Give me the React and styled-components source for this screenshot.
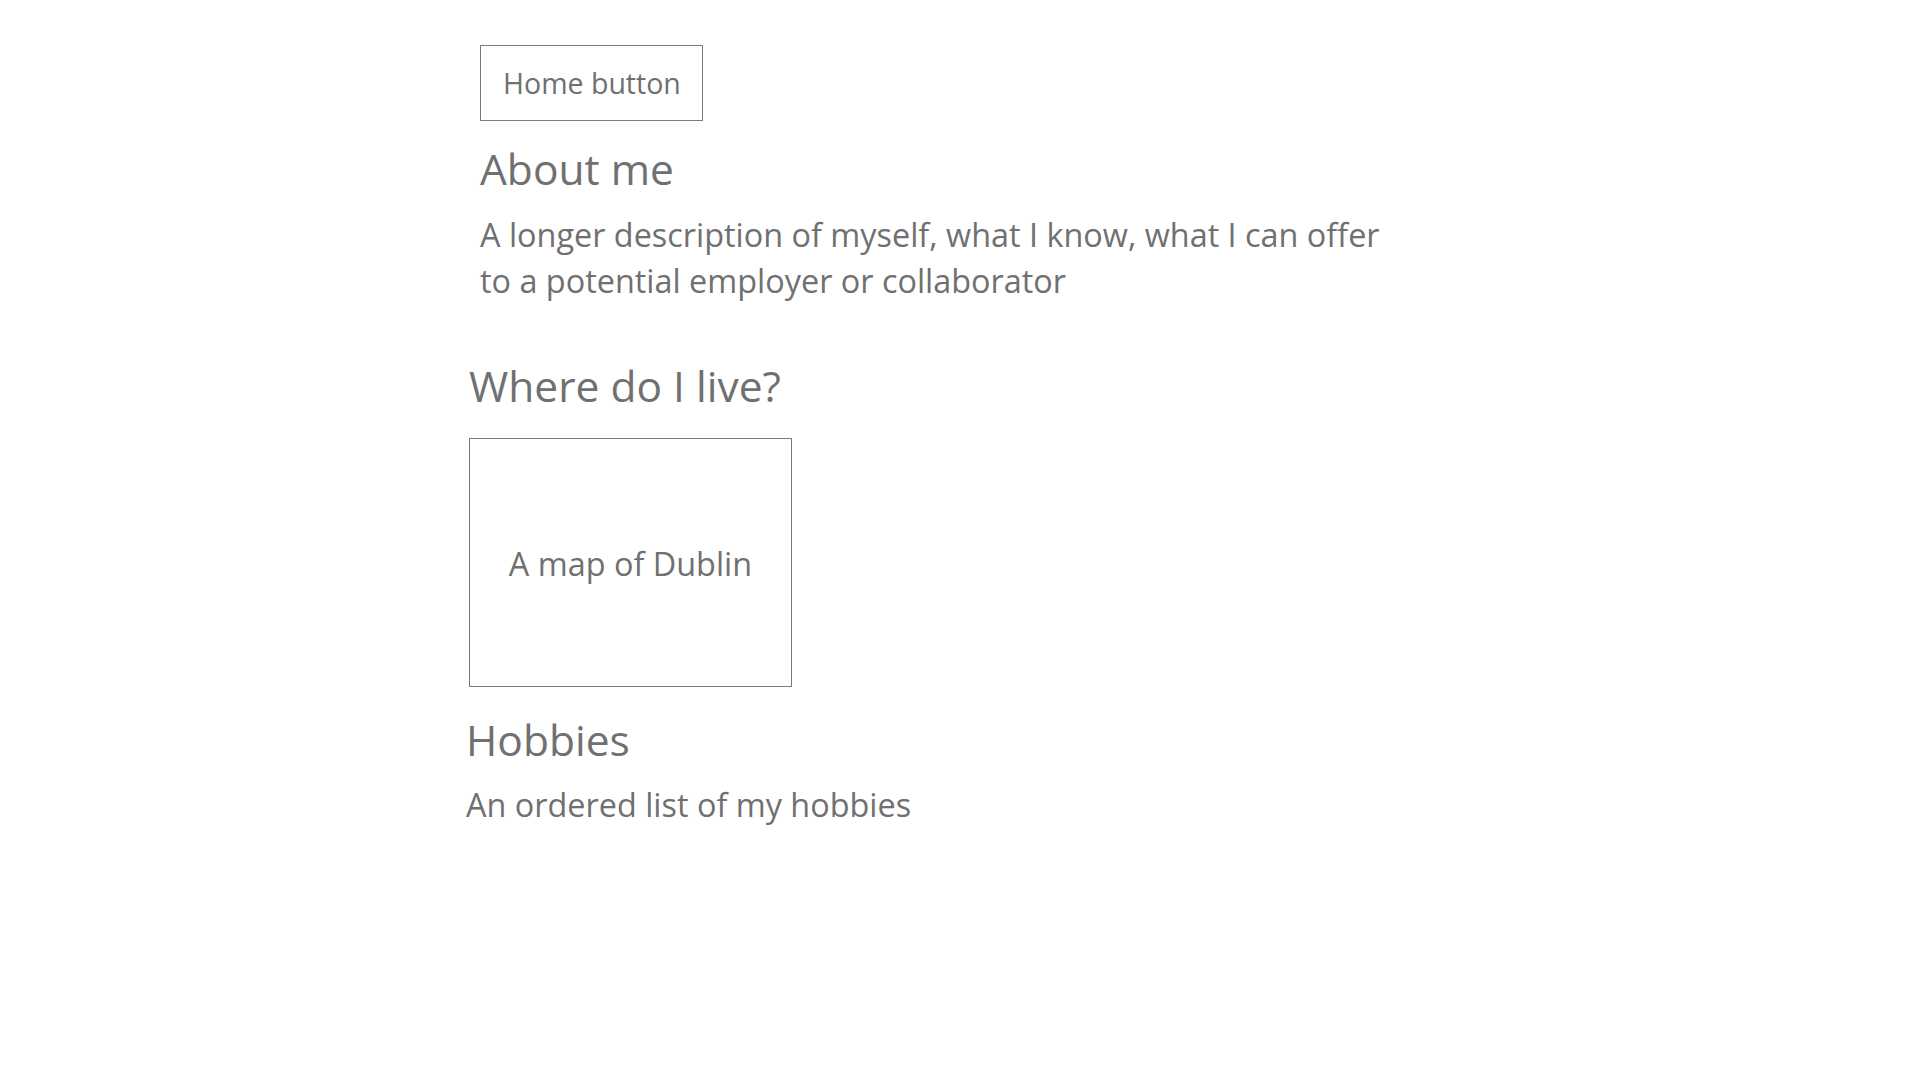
import React from "react";
import styled, { createGlobalStyle } from "styled-components";

const GlobalStyle = createGlobalStyle`
  html, body {
    margin: 0;
    padding: 0;
    background: #ffffff;
  }
  body {
    font-family: "Open Sans", "Noto Sans", "Liberation Sans", sans-serif;
    color: #707070;
  }
`;

const Page = styled.main`
  display: flex;
  flex-direction: column;
  align-items: flex-start;
  padding: 45px 0 60px 466px;
`;

const Section = styled.section`
  display: flex;
  flex-direction: column;
  align-items: flex-start;
  margin-left: ${(p) => p.$indent || 0}px;
  margin-top: ${(p) => p.$top || 0}px;
`;

const HomeButton = styled.button`
  font-family: inherit;
  font-size: 28.5px;
  line-height: 40px;
  color: #707070;
  background: #ffffff;
  border: 1px solid #7a7a7a;
  border-radius: 0;
  padding: 17px 21px 17px 22px;
  cursor: pointer;
`;

const Heading = styled.h2`
  margin: ${(p) => p.$top || 0}px 0 0 0;
  font-size: 42.5px;
  line-height: 52px;
  font-weight: 400;
  color: #707070;
`;

const Text = styled.p`
  margin: ${(p) => p.$top || 0}px 0 0 0;
  font-size: 32.4px;
  line-height: 46px;
  font-weight: 400;
  color: #707070;
  max-width: ${(p) => p.$width || "none"};
`;

const MapBox = styled.div`
  margin-top: 26px;
  width: 321px;
  height: 247px;
  border: 1px solid #7a7a7a;
  display: flex;
  align-items: center;
  justify-content: center;
  font-size: 32.4px;
  line-height: 46px;
  color: #707070;
`;

export default function App() {
  return (
    <>
      <GlobalStyle />
      <Page>
        <Section $indent={14}>
          <HomeButton type="button">Home button</HomeButton>
          <Heading $top={22}>About me</Heading>
          <Text $top={16} $width="922px">
            A longer description of myself, what I know, what I can offer to a
            potential employer or collaborator
          </Text>
        </Section>
        <Section $indent={3} $top={57}>
          <Heading>Where do I live?</Heading>
          <MapBox>A map of Dublin</MapBox>
        </Section>
        <Section $top={27}>
          <Heading>Hobbies</Heading>
          <Text $top={15}>An ordered list of my hobbies</Text>
        </Section>
      </Page>
    </>
  );
}
